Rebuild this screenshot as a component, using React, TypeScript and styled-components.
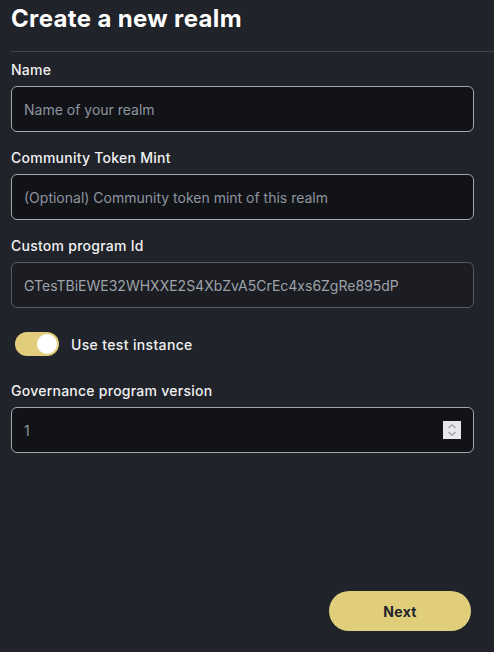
import { createGlobalStyle, styled } from "styled-components";

const GlobalStyle = createGlobalStyle`
  html, body {
    margin: 0;
    padding: 0;
    background: #202329;
  }
  body {
    font-family: Inter, "Noto Sans", sans-serif;
    color: #f4f4f5;
  }
`;

function App() {
  return (
    <Page>
      <GlobalStyle />
      <Heading>Create a new realm</Heading>
      <Divider />
      <Form>
        <Field>
          <Label>Name</Label>
          <Input placeholder="Name of your realm" />
        </Field>
        <Field>
          <Label>Community Token Mint</Label>
          <Input placeholder="(Optional) Community token mint of this realm" />
        </Field>
        <Field>
          <Label>Custom program Id</Label>
          <Input disabled value="GTesTBiEWE32WHXXE2S4XbZvA5CrEc4xs6ZgRe895dP" readOnly />
        </Field>
        <SwitchRow>
          <Switch $on>
            <Knob $on />
          </Switch>
          <SwitchLabel>Use test instance</SwitchLabel>
        </SwitchRow>
        <Field>
          <Label>Governance program version</Label>
          <NumberWrap>
            <Input value="1" readOnly $muted />
            <Spinner>
              <svg width="10" height="14" viewBox="0 0 10 14" fill="none" stroke="#9a9ca3" strokeWidth="1.3">
                <path d="M1.5 5 L5 1.8 L8.5 5" />
                <path d="M1.5 9 L5 12.2 L8.5 9" />
              </svg>
            </Spinner>
          </NumberWrap>
        </Field>
      </Form>
      <Footer>
        <NextButton>Next</NextButton>
      </Footer>
    </Page>
  );
}

const Page = styled("div")`
  min-height: 652px;
  box-sizing: border-box;
  padding-left: 11px;
  display: flex;
  flex-direction: column;
`;

const Heading = styled("h1")`
  margin: 0;
  padding-top: 3px;
  font-size: 24px;
  line-height: 32px;
  font-weight: 700;
  letter-spacing: 0.35px;
  color: #ffffff;
`;

const Divider = styled("div")`
  height: 1px;
  background: #40444b;
  margin-top: 16px;
`;

const Form = styled("div")`
  display: flex;
  flex-direction: column;
  padding-right: 20px;
  padding-top: 8px;
  gap: 16px;
`;

const Field = styled("div")`
  display: flex;
  flex-direction: column;
  gap: 6px;
`;

const Label = styled("label")`
  font-size: 14px;
  line-height: 20px;
  font-weight: 500;
  letter-spacing: 0.25px;
  color: #f1f1f3;
`;

const Input = styled("input")<{ $muted?: boolean }>`
  box-sizing: border-box;
  width: 100%;
  height: 46px;
  padding: 0 12px;
  border-radius: 6px;
  border: 1px solid #a2a6ae;
  background: #121317;
  color: ${(p) => (p.$muted ? "#8e94a0" : "#e5e7eb")};
  font-family: Inter, "Noto Sans", sans-serif;
  font-size: 14px;
  outline: none;

  &::placeholder {
    color: #8e94a0;
  }

  &:disabled {
    border-color: #585b62;
    color: #9ea2a9;
    background: #1b1d22;
  }
`;

const SwitchRow = styled("div")`
  display: flex;
  align-items: center;
  gap: 12px;
  padding-left: 4px;
  margin-top: 8px;
  margin-bottom: 9px;
`;

const Switch = styled("div")<{ $on?: boolean }>`
  width: 44px;
  height: 24px;
  border-radius: 12px;
  background: ${(p) => (p.$on ? "#e1cd7c" : "#4b4f57")};
  position: relative;
  flex-shrink: 0;
`;

const Knob = styled("span")<{ $on?: boolean }>`
  position: absolute;
  top: 2px;
  left: ${(p) => (p.$on ? "22px" : "2px")};
  width: 20px;
  height: 20px;
  border-radius: 50%;
  background: #ffffff;
`;

const SwitchLabel = styled("span")`
  font-size: 14px;
  font-weight: 500;
  letter-spacing: 0.35px;
  color: #f1f1f3;
`;

const NumberWrap = styled("div")`
  position: relative;
`;

const Spinner = styled("span")`
  position: absolute;
  right: 13px;
  top: 14px;
  width: 18px;
  height: 18px;
  background: #e8e8ec;
  display: flex;
  align-items: center;
  justify-content: center;
`;

const Footer = styled("div")`
  margin-top: auto;
  display: flex;
  justify-content: flex-end;
  padding-right: 23px;
  padding-bottom: 21px;
`;

const NextButton = styled("button")`
  width: 142px;
  height: 40px;
  border: none;
  border-radius: 20px;
  background: #e1ce7b;
  color: #22252b;
  font-family: Inter, "Noto Sans", sans-serif;
  font-size: 14px;
  font-weight: 700;
  letter-spacing: 0.3px;
`;

export default App;
